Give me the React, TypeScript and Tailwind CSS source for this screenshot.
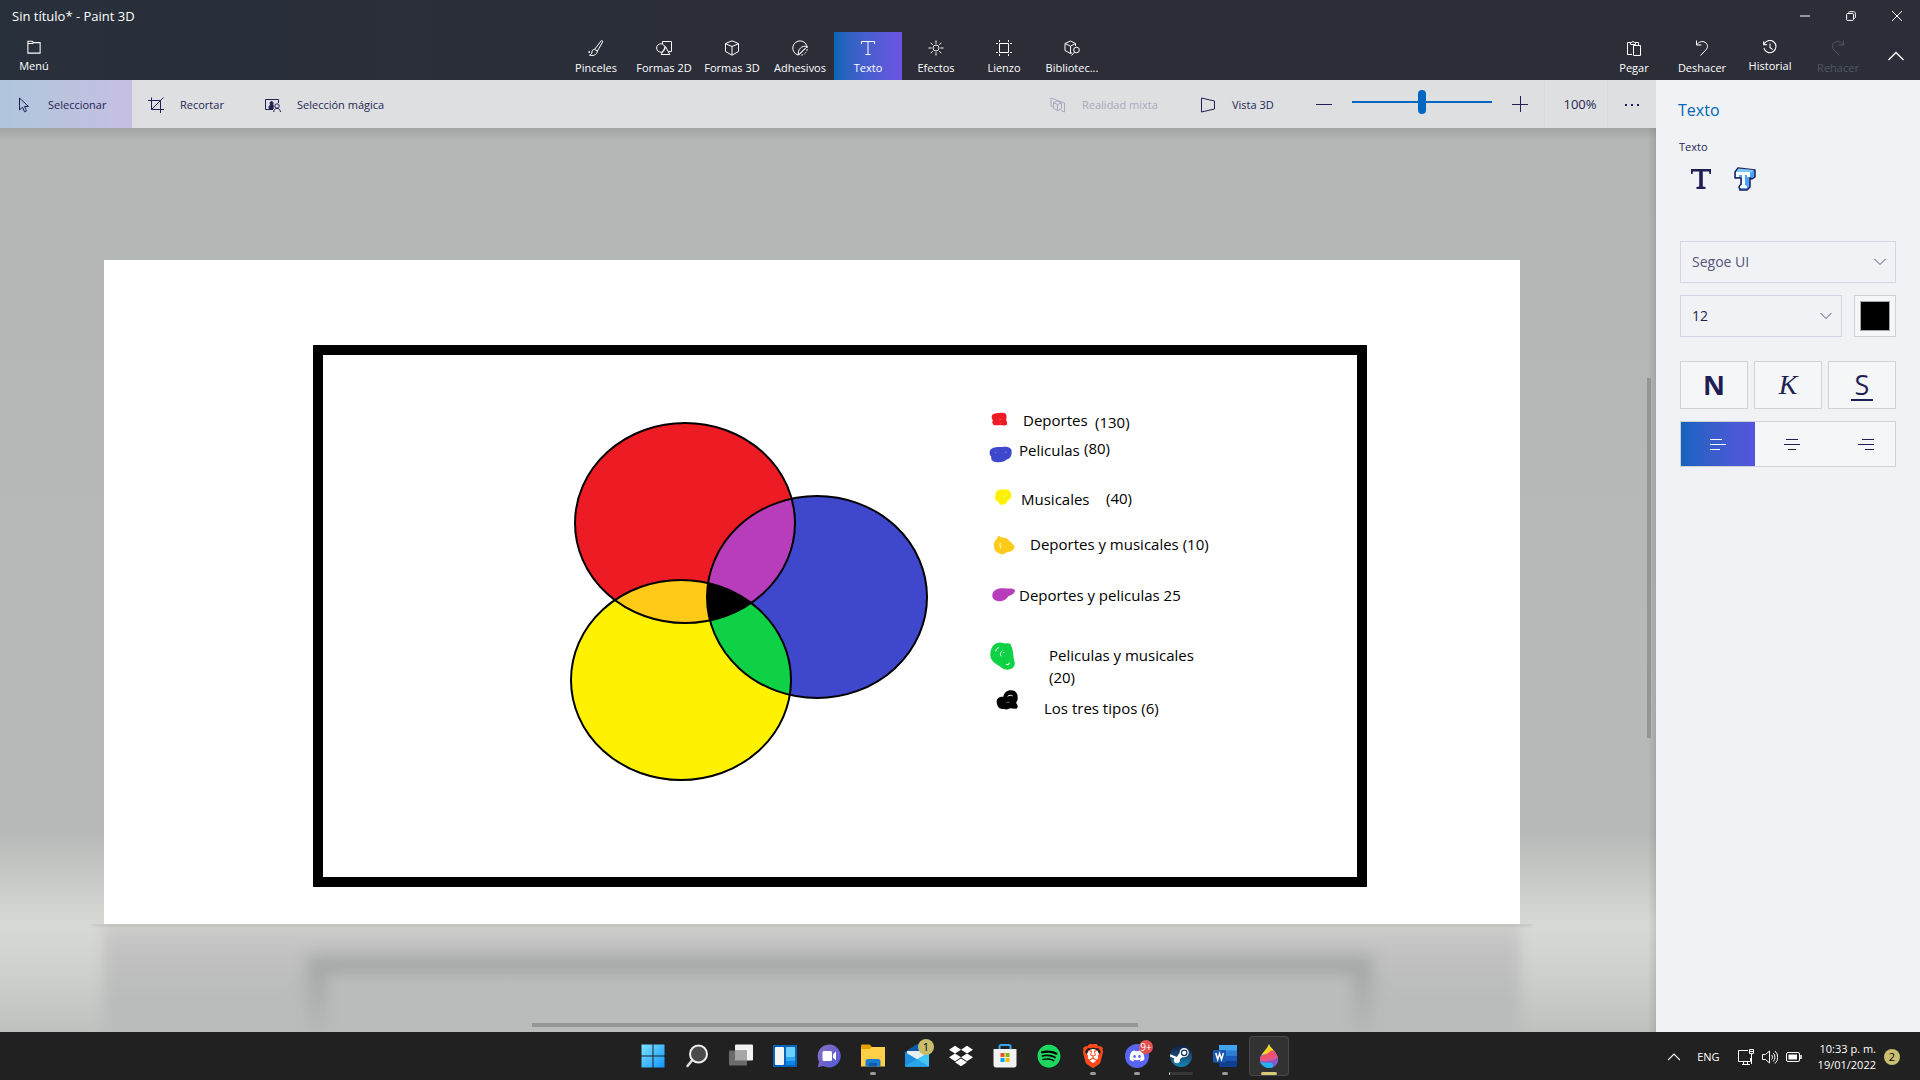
import React from "react";
import { FaSpotify, FaDiscord, FaDropbox } from "react-icons/fa";
import { SiBrave } from "react-icons/si";

type IconProps = { children: React.ReactNode; className?: string };

function Icon({ children, className = "size-4" }: IconProps) {
  return (
    <svg viewBox="0 0 16 16" fill="none" stroke="currentColor" strokeWidth="1" className={className} aria-hidden="true">
      {children}
    </svg>
  );
}

const icons = {
  menu: (
    <Icon className="size-[14px]">
      <path d="M1 15V1.500h5L7.500 3H15v12zM1 4h5.500l1-1" strokeWidth="1.200" />
    </Icon>
  ),
  brush: (
    <Icon>
      <path d="M13.200.8c.8-.5 1.900.3 1.400 1.300L9.400 11 6.600 9.400zM6.600 9.400C4.500 9.300 4 10.500 4 12c0 1.500-1 2.500-2.500 3.200 3 .8 7.500.2 7.900-4.200M1.200 11v2M.5 12h1.500" />
    </Icon>
  ),
  shapes2d: (
    <Icon>
      <circle cx="4.800" cy="8" r="4.200" />
      <path d="M6.500 4V1.500h9v10h-3" />
      <path d="M9.500 6.500 5.200 14.500h8.600z" />
    </Icon>
  ),
  shapes3d: (
    <Icon>
      <path d="M8 .8 14.500 3.500v8L8 15.200 1.500 11.500v-8zM1.500 3.700 8 6.500l6.500-2.800M8 6.500v8.500" />
    </Icon>
  ),
  sticker: (
    <Icon>
      <path d="M15.200 8A7.200 7.200 0 1 0 6 15" />
      <path d="M15.200 6.500 6.500 15.200c-.6-3 .2-5.500 2-7.200s4-2.200 6.700-1.500zM7 14.500l6-6" />
      <path d="M15.200 9A7 7 0 0 1 9 15.200" strokeDasharray="2 1.500" />
    </Icon>
  ),
  text: (
    <Icon>
      <path d="M1.500 4V1.500h13V4M8 1.500v13M5.500 14.500h5" />
    </Icon>
  ),
  effects: (
    <Icon>
      <circle cx="8" cy="8" r="3" />
      <path d="M8 .5v3M8 12.500v3M.5 8h3M12.500 8h3M2.700 2.700l2 2M11.300 11.300l2 2M13.300 2.700l-2 2M4.700 11.300l-2 2" />
    </Icon>
  ),
  canvas: (
    <Icon>
      <path d="M3.500 3.500h9v9h-9zM3.500 0v2M12.500 0v2M3.500 14v2M12.500 14v2M0 3.500h2M14 3.500h2M0 12.500h2M14 12.500h2" />
    </Icon>
  ),
  library: (
    <Icon>
      <path d="M11.500 6V3.500L6.500 1 1 3.500v7L6.500 13.500l1.500-.7M1 3.500l5.500 2.700 5-2.700M6.500 6.200v7" />
      <circle cx="12.500" cy="10" r="2.800" />
      <path d="M10.500 12 7.500 15.500" />
    </Icon>
  ),
  paste: (
    <Icon>
      <path d="M6 14.500H1.500v-12h3M9.500 2.500h3V5M4.500 4.500v-2h1.300a1.300 1.300 0 0 1 2.500 0h1.300v2zM7.500 5.500h7v10h-7z" />
    </Icon>
  ),
  undo: (
    <Icon>
      <path d="M2.500.5v4.500h5M2.500 5C5 1.500 8.500.8 11 2.300c3 1.800 3.200 5 1 7.500L6.500 15.500" />
    </Icon>
  ),
  history: (
    <Icon className="size-[14px]">
      <path d="M.8 1.500v4h4M1.200 5.200A7 7 0 1 1 1 9M8 4v4.500l3 2.500" strokeWidth="1.200" />
    </Icon>
  ),
  redo: (
    <Icon>
      <path d="M13.500.5v4.500h-5M13.500 5C11 1.500 7.500.8 5 2.300 2 4.100 1.800 7.300 4 9.800l5.500 5.700" />
    </Icon>
  ),
  select: (
    <Icon>
      <path d="M3.500 1v12l3-2.800 2 4.600 2-.9-2-4.400h4z" />
    </Icon>
  ),
  crop: (
    <Icon>
      <path d="M3.500.5v12H16M0 3.500h12.500V16M3.500 12.500l12-12" />
    </Icon>
  ),
  magic: (
    <Icon>
      <path d="M8 12.500H.5V2.500h13V6" />
      <path d="M4.500 12c-1-1.500-.4-3.500 1-4-.8-2.300-.2-3.500 1-3.500s2 1.200 1.200 3.500c.9.500.9 2 .3 4z" fill="currentColor" />
      <circle cx="12" cy="9" r="2.200" />
      <path d="M8.700 15c.2-2.500 1.400-3.600 3.300-3.600s3.200 1.100 3.500 3.600" />
    </Icon>
  ),
  mixed: (
    <Icon>
      <path d="M3 10 1 9V1l13.500 5v9l-3.500-1.500" />
      <path d="M3.500 5.500 7.500 4l4 2v5.500l-4 2.300-4-2.800zM3.500 5.500l4 2 4-1.500M7.500 7.500v6" />
    </Icon>
  ),
  view3d: (
    <Icon>
      <path d="M1.500 1v14l13-3V4z" />
    </Icon>
  ),
};

function RibbonButton({ icon, label, active, disabled }: { icon: React.ReactNode; label: string; active?: boolean; disabled?: boolean }) {
  return (
    <button
      type="button"
      disabled={disabled}
      className={
        "flex h-12 w-[68px] shrink-0 flex-col items-center gap-1 pt-2 text-[11px] leading-4 whitespace-nowrap " +
        (active ? "bg-linear-to-r from-[#0565b9] to-[#6a54e4] text-white" : disabled ? "text-[#54565f]" : "text-white")
      }
    >
      {icon}
      <span>{label}</span>
    </button>
  );
}

function Header() {
  return (
    <header className="bg-linear-to-r from-[#28303b] via-[#2c2d37] to-[#2b2e38] text-white">
      <div className="flex h-8 items-center justify-between">
        <h1 className="pl-3 text-[13px] leading-4 font-normal">Sin título* - Paint 3D</h1>
        <div className="flex">
          <button type="button" aria-label="Minimizar" className="flex h-8 w-[46px] items-center justify-center">
            <Icon className="size-[10px]"><path d="M0 8h16" strokeWidth="1.600" /></Icon>
          </button>
          <button type="button" aria-label="Restaurar" className="flex h-8 w-[46px] items-center justify-center">
            <Icon className="size-[10px]">
              <g strokeWidth="1.600">
                <rect x="1" y="4" width="11" height="11" rx="1.500" />
                <path d="M4 3.500C4 2 5 1 6.500 1H12c2 0 3 1 3 3v5.500c0 1.500-1 2.500-2.500 2.500" />
              </g>
            </Icon>
          </button>
          <button type="button" aria-label="Cerrar" className="flex h-8 w-[46px] items-center justify-center">
            <Icon className="size-[10px]"><path d="M0 0l16 16M16 0 0 16" strokeWidth="1.600" /></Icon>
          </button>
        </div>
      </div>
      <div className="flex">
        <RibbonButton icon={icons.menu} label="Menú" />
        <nav className="flex flex-1 justify-center">
          <RibbonButton icon={icons.brush} label="Pinceles" />
          <RibbonButton icon={icons.shapes2d} label="Formas 2D" />
          <RibbonButton icon={icons.shapes3d} label="Formas 3D" />
          <RibbonButton icon={icons.sticker} label="Adhesivos" />
          <RibbonButton icon={icons.text} label="Texto" active />
          <RibbonButton icon={icons.effects} label="Efectos" />
          <RibbonButton icon={icons.canvas} label="Lienzo" />
          <RibbonButton icon={icons.library} label="Bibliotec..." />
        </nav>
        <RibbonButton icon={icons.paste} label="Pegar" />
        <RibbonButton icon={icons.undo} label="Deshacer" />
        <RibbonButton icon={icons.history} label="Historial" />
        <RibbonButton icon={icons.redo} label="Rehacer" disabled />
        <button type="button" aria-label="Contraer cinta" className="flex w-12 items-center justify-center">
          <Icon><path d="M.5 12 8 4.500l7.500 7.500" strokeWidth="1.300" /></Icon>
        </button>
      </div>
    </header>
  );
}

type ToolButtonProps = { icon: React.ReactNode; label: string; width: string; active?: boolean; disabled?: boolean };

function ToolButton({ icon, label, width, active, disabled }: ToolButtonProps) {
  return (
    <button
      type="button"
      disabled={disabled}
      className={
        "flex h-12 shrink-0 items-center gap-4 pt-px pl-4 text-[11px] leading-4 whitespace-nowrap " +
        width +
        (active ? " bg-linear-to-r from-[#aec6db] to-[#c7bfe2]" : disabled ? " text-[#a9a9bd]" : "")
      }
    >
      {icon}
      <span>{label}</span>
    </button>
  );
}

function Toolbar() {
  return (
    <div className="relative z-10 flex h-12 items-center bg-[#dddfe1] text-[#1f1f55]">
      <ToolButton icon={icons.select} label="Seleccionar" width="w-[132px]" active />
      <ToolButton icon={icons.crop} label="Recortar" width="w-[117px]" />
      <ToolButton icon={icons.magic} label="Selección mágica" width="w-[164px]" />
      <div className="flex-1" />
      <ToolButton icon={icons.mixed} label="Realidad mixta" width="w-[150px]" disabled />
      <ToolButton icon={icons.view3d} label="Vista 3D" width="w-[116px]" />
      <button type="button" aria-label="Alejar" className="flex size-12 items-center justify-center">
        <Icon><path d="M0 8.500h16" /></Icon>
      </button>
      <input
        type="range"
        aria-label="Zoom"
        min={0}
        max={100}
        defaultValue={50}
        className="mx-1 mb-1 h-6 w-[140px] appearance-none bg-transparent [&::-webkit-slider-runnable-track]:h-0.5 [&::-webkit-slider-runnable-track]:bg-[#0067c0] [&::-webkit-slider-thumb]:-mt-[11px] [&::-webkit-slider-thumb]:h-6 [&::-webkit-slider-thumb]:w-2 [&::-webkit-slider-thumb]:appearance-none [&::-webkit-slider-thumb]:rounded-full [&::-webkit-slider-thumb]:bg-[#0067c0]"
      />
      <button type="button" aria-label="Acercar" className="flex size-12 items-center justify-center">
        <Icon><path d="M0 8.500h16M8.500 0v16" /></Icon>
      </button>
      <button type="button" className="h-12 w-16 border-x border-[#d5d7e2] pt-px pl-2 text-[13px]">100%</button>
      <button type="button" aria-label="Más opciones" className="flex size-12 items-center justify-center">
        <Icon>
          <g fill="currentColor" stroke="none">
            <rect x="1" y="8" width="2" height="2" />
            <rect x="7" y="8" width="2" height="2" />
            <rect x="13" y="8" width="2" height="2" />
          </g>
        </Icon>
      </button>
    </div>
  );
}

function VennDiagram() {
  return (
    <svg viewBox="560 410 380 380" className="absolute top-[150px] left-[456px] size-[380px]" role="img" aria-label="Diagrama de Venn">
      <defs>
        <clipPath id="inRed"><ellipse cx="685" cy="523" rx="110" ry="100" /></clipPath>
        <clipPath id="inBlue"><ellipse cx="817" cy="597" rx="110" ry="101" /></clipPath>
      </defs>
      <ellipse cx="685" cy="523" rx="110" ry="100" fill="#ed1c24" />
      <ellipse cx="817" cy="597" rx="110" ry="101" fill="#3f48cc" />
      <ellipse cx="681" cy="680" rx="110" ry="100" fill="#fff200" />
      <g clipPath="url(#inRed)">
        <ellipse cx="817" cy="597" rx="110" ry="101" fill="#b83dba" />
        <ellipse cx="681" cy="680" rx="110" ry="100" fill="#ffca18" />
      </g>
      <g clipPath="url(#inBlue)">
        <ellipse cx="681" cy="680" rx="110" ry="100" fill="#0ed145" />
        <g clipPath="url(#inRed)">
          <ellipse cx="681" cy="680" rx="110" ry="100" fill="#000" />
        </g>
      </g>
      <g fill="none" stroke="#000" strokeWidth="2">
        <ellipse cx="685" cy="523" rx="110" ry="100" />
        <ellipse cx="817" cy="597" rx="110" ry="101" />
        <ellipse cx="681" cy="680" rx="110" ry="100" />
      </g>
    </svg>
  );
}

function LegendMarks() {
  return (
    <svg viewBox="0 0 840 1020" className="absolute top-[130px] left-[856px] h-[340px] w-[280px]" aria-hidden="true">
      <path fill="#ed1c24" d="M97 74c8-5 32-8 40-3 4 6 3 14 1 19 4 5 4 11 2 15-5 2-14 1-19 0-7 1-16 2-21-1-4-5-4-10-1-13-5-5-5-12-2-17z" />
      <path stroke="#fbb" strokeWidth="1" fill="none" d="M117 90l8-3M119 99h4" />
      <path fill="#3f48cc" d="M89 186c1-14 20-16 38-15 16-2 29 2 28 15 0 15-8 21-14 22-6 8-22 10-34 8-12-3-15-9-13-16-4-3-6-9-5-14z" />
      <path stroke="#8f94e0" strokeWidth="2" fill="none" d="M104 188h5M133 187l8-1" />
      <path fill="#fff200" d="M107 312c1-10 11-13 16-14 8 2 11 2 16 0 10 2 15 9 15 18 0 10-6 15-12 16-1 9-10 13-16 12-6-1-10-4-10-9-10-2-14-11-9-23z" />
      <path stroke="#fff" strokeWidth="2" fill="none" d="M129 320l7-3" />
      <path fill="#ffca18" d="M102 462c1-11 7-13 10-17 1-8 7-9 10-3 8 0 18 2 23 7 4 7 17 12 19 23-3 10-14 14-24 15-8 8-20 6-26 1-10-4-13-14-12-26z" />
      <path stroke="#fff" strokeWidth="3" fill="none" d="M121 459c-2 6-1 11 2 16" />
      <path fill="#b83dba" d="M97 615c2-15 16-20 32-20 16 1 33-2 36 6 0 10-11 14-20 18-5 9-16 15-27 15-12-1-22-7-21-19z" />
      <path fill="#0ed145" d="M91 792c1-20 11-33 25-34 10-2 16 4 24 2 8-2 14 1 13 7 8 13 6 34 11 50 2 13-8 22-22 22-13 0-19-9-29-14-14-8-23-18-22-33z" />
      <path stroke="#fff" strokeWidth="3" fill="none" d="M107 784c1-7 5-10 10-11M127 782c-6 6-8 10-3 17M130 786l3 3M138 823l8 1 2-6" />
      <path fill="#000" d="M110 937c-1-12 8-18 20-17 2-12 12-20 24-19 14 0 20 12 19 24 0 8-3 10-5 14 7 6 6 15 1 17-7 1-13-1-19-1-6 4-14 4-18 1-11 4-20-4-22-19z" />
      <path stroke="#fff" strokeWidth="3" fill="none" d="M143 919c4-4 11-4 15-1" />
      <path stroke="#999" strokeWidth="2" fill="none" d="M139 937h10" />
    </svg>
  );
}

function Drawing() {
  return (
    <div className="relative z-10 flex-1 bg-white text-[15px] leading-[22px] text-black">
      <div className="absolute top-[85px] right-[153px] bottom-[37px] left-[209px] border-[10px] border-black" />
      <VennDiagram />
      <LegendMarks />
      <p className="absolute top-[149px] left-[919px] whitespace-nowrap">Deportes</p>
      <p className="absolute top-[151px] left-[991px] whitespace-nowrap">(130)</p>
      <p className="absolute top-[179px] left-[915px] whitespace-nowrap">Peliculas</p>
      <p className="absolute top-[177px] left-[980px] whitespace-nowrap">(80)</p>
      <p className="absolute top-[228px] left-[917px] whitespace-nowrap">Musicales</p>
      <p className="absolute top-[227px] left-[1002px] whitespace-nowrap">(40)</p>
      <p className="absolute top-[273px] left-[926px] whitespace-nowrap">Deportes y musicales (10)</p>
      <p className="absolute top-[324px] left-[915px] whitespace-nowrap">Deportes y peliculas 25</p>
      <p className="absolute top-[384px] left-[945px] w-[160px]">Peliculas y musicales (20)</p>
      <p className="absolute top-[437px] left-[940px] whitespace-nowrap">Los tres tipos (6)</p>
    </div>
  );
}

function Reflection() {
  return (
    <div className="absolute inset-x-0 bottom-0 h-[108px] overflow-hidden">
      <div className="absolute top-0 right-[136px] -bottom-10 left-[104px] bg-linear-to-b from-[#cbcccb] via-[#c0c1c0] via-20% to-[#babcbb] to-50% blur-[6px]" />
      <div className="absolute top-0 right-[124px] left-[92px] h-[2px] bg-black/10 blur-[1px]" />
      <div className="absolute top-[32px] right-[284px] -bottom-16 left-[308px] border-[18px] border-[#979998]/65 blur-[8px]" />
      <div className="absolute right-[250px] bottom-0 left-[280px] h-[60px] bg-linear-to-b from-transparent to-[#babcbb]/80" />
    </div>
  );
}

function Stage() {
  return (
    <main className="relative flex min-h-0 flex-1 flex-col overflow-hidden bg-linear-to-b from-[#b4b6b5] from-0% via-[#b8bab9] via-78% to-[#d7d9d5] to-88% pt-[132px] pr-[136px] pb-[108px] pl-[104px]">
      <div className="absolute inset-x-0 bottom-0 h-[108px] bg-linear-to-b from-[#d7d9d5] via-[#d2d4d0] via-30% to-[#bfc1bf]" />
      <Reflection />
      <Drawing />
      <div className="absolute inset-x-0 top-0 h-3 bg-linear-to-b from-black/10 to-transparent" />
      <div className="absolute inset-y-0 right-0 w-2 bg-linear-to-l from-black/10 to-transparent" />
      <div className="absolute top-[250px] right-[5px] h-[360px] w-1 bg-[#969595]" />
      <div className="absolute bottom-[5px] left-[532px] z-20 h-1 w-[606px] bg-[#969696]" />
    </main>
  );
}

function Chevron({ className }: { className: string }) {
  return (
    <svg viewBox="0 0 12 8" className={className} fill="none" stroke="currentColor" strokeWidth="1" aria-hidden="true">
      <path d="M.5 1 6 6.500 11.500 1" />
    </svg>
  );
}

function SidePanel() {
  const styleButton = "flex h-12 flex-1 items-center justify-center border border-[#d0d2d3] bg-[#f5f6f8]";
  const alignButton = "flex w-[74px] shrink-0 items-center justify-center";
  const select = "h-[42px] w-full appearance-none border border-[#d3d6e2] bg-transparent px-[11px] pb-0.5 text-[14px]";
  return (
    <aside className="relative w-[264px] shrink-0 bg-[#f0f2f5] px-6 pt-[18px] text-[#1f1f55]">
      <h2 className="-ml-0.5 text-[16px] leading-6 text-[#0067b8]">Texto</h2>
      <h3 className="mt-[17px] -ml-px text-[11px] leading-4">Texto</h3>
      <div className="mt-1 -ml-px flex">
        <button type="button" aria-label="Texto 2D" className="flex h-10 w-11 items-center justify-center">
          <svg viewBox="0 0 20 20" className="size-5" fill="currentColor" aria-hidden="true">
            <path d="M0 0h20v5h-1.500L18 2.500h-6.200V17.500l2.700.5v2h-9v-2l2.700-.5V2.500H2L1.500 5H0z" />
          </svg>
        </button>
        <button type="button" aria-label="Texto 3D" className="flex h-10 w-11 items-center justify-center">
          <svg viewBox="0 0 22 24" className="h-6 w-[22px]" strokeLinejoin="round" aria-hidden="true">
            <path d="M1 5 4 1l17 2v7l-3 2-2-1v9l-3 3H6l-1-3 2-3V11H1z" fill="#4aa3ff" stroke="#1f1f55" strokeWidth="1.500" />
            <path d="M4.500 1.500 20 3l-2.500 2.500L2 5z" fill="#7ac8ff" />
            <path d="M2 5h14v5h-3V8h-2v10l2 1v2H6v-2l2-1V8H5v2H2z" fill="#fff" />
          </svg>
        </button>
      </div>
      <div className="relative mt-[42px]">
        <select aria-label="Fuente" className={select + " text-[#55547c]"}>
          <option>Segoe UI</option>
        </select>
        <Chevron className="pointer-events-none absolute top-[17px] right-[10px] h-2 w-3 text-[#55547c]" />
      </div>
      <div className="mt-3 flex gap-3">
        <div className="relative flex-1">
          <select aria-label="Tamaño de fuente" className={select}>
            <option>12</option>
          </select>
          <Chevron className="pointer-events-none absolute top-[17px] right-[10px] h-2 w-3 text-[#55547c]" />
        </div>
        <button type="button" aria-label="Color" className="flex size-[42px] items-center justify-center border border-[#d0d2d3] bg-[#f5f6f8]">
          <span className="size-[30px] border border-[#a6a6a6] bg-black" />
        </button>
      </div>
      <div className="mt-6 flex gap-1.5">
        <button type="button" aria-label="Negrita" className={styleButton}>
          <span className="text-[27px] leading-8 font-bold">N</span>
        </button>
        <button type="button" aria-label="Cursiva" className={styleButton}>
          <span className="font-['Liberation_Serif',serif] text-[28px] leading-8 italic">K</span>
        </button>
        <button type="button" aria-label="Subrayado" className={styleButton}>
          <span className="mt-0.5 w-[22px] border-b-2 border-current text-[27px] leading-7">S</span>
        </button>
      </div>
      <div className="mt-3 flex h-[46px] overflow-hidden border border-[#d0d2d3] bg-[#f5f6f8]">
        <button type="button" aria-label="Alinear a la izquierda" className={alignButton + " bg-linear-to-r from-[#1463bf] to-[#5455dc] text-white"}>
          <Icon><path d="M0 3.500h12M0 8.500h16M0 13.500h10" /></Icon>
        </button>
        <button type="button" aria-label="Centrar" className={alignButton}>
          <Icon><path d="M2 3.500h12M0 8.500h16M4 13.500h8" /></Icon>
        </button>
        <button type="button" aria-label="Alinear a la derecha" className={alignButton}>
          <Icon><path d="M4 3.500h12M0 8.500h16M7 13.500h9" /></Icon>
        </button>
      </div>
    </aside>
  );
}

type TaskItemProps = { label: string; children: React.ReactNode; running?: boolean; active?: boolean; badge?: React.ReactNode };

function TaskItem({ label, children, running, active, badge }: TaskItemProps) {
  return (
    <button
      type="button"
      aria-label={label}
      className={"relative flex size-10 items-center justify-center rounded-sm " + (active ? "border border-white/10 bg-white/8" : "")}
    >
      {children}
      {badge}
      {running && <span className="absolute bottom-[1px] h-[3px] w-1.5 rounded-full bg-[#9a9a9a]" />}
      {active && <span className="absolute bottom-0 h-[3px] w-4 rounded-full bg-[#d5ca78]" />}
    </button>
  );
}

function Art({ children }: { children: React.ReactNode }) {
  return (
    <svg viewBox="0 0 24 24" className="size-6" aria-hidden="true">
      {children}
    </svg>
  );
}

function Taskbar() {
  return (
    <footer className="grid h-12 shrink-0 grid-cols-[1fr_auto_1fr] items-center bg-[#212121] text-white">
      <div />
      <div className="flex gap-1 pl-0.5">
        <TaskItem label="Inicio">
          <Art>
            <defs>
              <linearGradient id="win" gradientUnits="userSpaceOnUse" x1="0" y1="0" x2="24" y2="24">
                <stop offset="0" stopColor="#7fe4ff" />
                <stop offset="1" stopColor="#0f94ff" />
              </linearGradient>
            </defs>
            <path fill="url(#win)" d="M.5.500h11v11H.5zM12.500.500h11v11h-11zM.5 12.500h11v11H.5zM12.500 12.500h11v11h-11z" />
          </Art>
        </TaskItem>
        <TaskItem label="Buscar">
          <Art>
            <path d="M7 16.500 2.500 22" stroke="#dcdcdc" strokeWidth="2.500" strokeLinecap="round" />
            <circle cx="13.500" cy="10" r="8.500" fill="#4b4b4b" stroke="#efefef" strokeWidth="2" />
          </Art>
        </TaskItem>
        <TaskItem label="Vista de tareas">
          <Art>
            <rect x="6" y="0.500" width="18" height="16" rx="1" fill="#f2f2f2" />
            <rect x="0" y="6.500" width="18" height="15" rx="1" fill="#6b6b6b" />
            <path d="M6 6.500h12v10H6z" fill="#a5a5a5" />
          </Art>
        </TaskItem>
        <TaskItem label="Widgets">
          <Art>
            <rect y="1" width="24" height="22" rx="1" fill="#0a63b8" />
            <rect x="2" y="3" width="9" height="18" rx="1" fill="#f3f3f3" />
            <rect x="13" y="3" width="9" height="10" rx="1" fill="#69d2ff" />
            <rect x="13" y="13" width="9" height="4" fill="#2fa8f5" />
            <rect x="13" y="17" width="9" height="4" fill="#0b86e4" />
          </Art>
        </TaskItem>
        <TaskItem label="Chat">
          <Art>
            <defs>
              <linearGradient id="chat" x1="0" y1="0" x2="1" y2="1">
                <stop offset="0" stopColor="#8c6fc4" />
                <stop offset="1" stopColor="#5059d6" />
              </linearGradient>
            </defs>
            <path fill="url(#chat)" d="M12 .5A11.500 11.500 0 1 1 6.500 22L.8 23.200 2 17.500A11.500 11.500 0 0 1 12 .5z" />
            <rect x="5.500" y="7" width="9.500" height="10" rx="1.500" fill="#fff" />
            <path d="M16 10.500 19 7.500v9l-3-3z" fill="#fff" />
          </Art>
        </TaskItem>
        <TaskItem label="Explorador de archivos" running>
          <Art>
            <path d="M0 2c0-1 .5-1.500 1.500-1.500h7L11 3h13v6H0z" fill="#e8a200" />
            <path d="M0 5h8.500L11 3h12c.6 0 1 .4 1 1v18.500H0z" fill="#ffcf48" />
            <path d="M4.500 22.500v-5c0-1.500 1-2.500 2.500-2.500h10c1.500 0 2.500 1 2.500 2.500v5z" fill="#1a7ad0" />
            <path d="M8 19h8v3.500H8z" fill="#125ba6" />
          </Art>
        </TaskItem>
        <TaskItem
          label="Correo"
          badge={<span className="absolute top-[3px] right-[3px] flex size-4 items-center justify-center rounded-full bg-[#c8bd6d] text-[11px] leading-4 text-black">1</span>}
        >
          <Art>
            <path d="M0 8 12 0l12 8v4H0z" fill="#0c5ba8" />
            <path d="M2 7h20v7l-10 5L2 14z" fill="#e9eef2" />
            <path d="M0 8v14.500h24z" fill="#1e8fe0" />
            <path d="M24 8v14.500H0L14 14z" fill="#43c6f5" />
            <path d="M0 22.500 12 15l12 7.500z" fill="#2aa4ea" />
          </Art>
        </TaskItem>
        <TaskItem label="Dropbox">
          <FaDropbox className="size-6" />
        </TaskItem>
        <TaskItem label="Microsoft Store">
          <Art>
            <path d="M6.500 6V2.500c0-1 .5-1.500 1.500-1.500h8c1 0 1.500.5 1.500 1.500V6" fill="none" stroke="#31a9f0" strokeWidth="2" />
            <path d="M.5 5h23v16c0 1.500-1 2.500-2.500 2.500H3C1.500 23.500.5 22.500.5 21z" fill="#f2f2f2" />
            <path d="M7.500 9h4v4h-4z" fill="#f1511b" />
            <path d="M12.500 9h4v4h-4z" fill="#80bb03" />
            <path d="M7.500 14h4v4h-4z" fill="#03a5ef" />
            <path d="M12.500 14h4v4h-4z" fill="#ffb902" />
          </Art>
        </TaskItem>
        <TaskItem label="Spotify">
          <span className="flex rounded-full bg-black">
            <FaSpotify className="size-6 text-[#1ed760]" />
          </span>
        </TaskItem>
        <TaskItem label="Brave" running>
          <span className="relative flex">
            <span className="absolute inset-x-[6px] inset-y-[5px] rounded-full bg-white" />
            <SiBrave className="relative size-6 text-[#fb4a1d]" />
          </span>
        </TaskItem>
        <TaskItem
          label="Discord"
          running
          badge={<span className="absolute top-1 right-1 flex size-3.5 items-center justify-center rounded-full bg-[#e2504f] text-[10px] leading-3">9+</span>}
        >
          <span className="flex size-6 items-center justify-center rounded-full bg-[#5865f2]">
            <FaDiscord className="size-4" />
          </span>
        </TaskItem>
        <TaskItem label="Steam">
          <span className="flex size-[22px] rounded-full bg-linear-to-b from-[#101c3c] to-[#1387b8]">
            <svg viewBox="0 0 24 24" className="size-[22px]" aria-hidden="true">
              <path d="M0 12.500 9 16.500 14 13a5 5 0 1 0-3.500-4.500L7.500 13 .2 10z" fill="#fff" />
              <circle cx="7.500" cy="16.500" r="3.300" fill="#fff" />
              <circle cx="15.500" cy="8.500" r="3" fill="none" stroke="#12325a" strokeWidth="1.300" />
            </svg>
          </span>
          <span className="absolute bottom-[1px] flex h-[3px] w-6 overflow-hidden rounded-full bg-white/10">
            <span className="w-px bg-white" />
          </span>
        </TaskItem>
        <TaskItem label="Word" running>
          <Art>
            <path d="M6 1h18v6H6z" fill="#41a5ee" />
            <path d="M6 6.500h18v5.500H6z" fill="#2b7cd3" />
            <path d="M6 12h18v5.500H6z" fill="#185abd" />
            <path d="M6 17.500h18V23H6z" fill="#103f91" />
            <rect x="0" y="6" width="13" height="12.500" rx="1" fill="#1a56b0" />
            <path d="m2.800 9 1.900 6.500L6.600 9.500l1.900 6L10.400 9" fill="none" stroke="#fff" strokeWidth="1.500" />
          </Art>
        </TaskItem>
        <TaskItem label="Paint 3D" active>
          <Art>
            <defs>
              <clipPath id="drop">
                <path d="M12 0c1 4 9 9 9 15.500a9 8.500 0 0 1-18 0C3 10 10 6 12 0z" />
              </clipPath>
            </defs>
            <g clipPath="url(#drop)">
              <path d="M0 0h24v24H0z" fill="#2ba9e6" />
              <path d="M4 0h16v9L2 11z" fill="#ffd21f" />
              <path d="M0 12c6 0 11-2 14-5.500L24 8v6L0 17z" fill="#f0506f" />
              <path d="M0 15c9 1 16-1 22-6l2 6-8 5-16-1z" fill="#e0568d" />
              <path d="M0 16.500c8 2 17 1 22-4.500v9l-7 3-15-3z" fill="#8b57c8" />
              <path d="M0 16c4 3 8 3 12 2.500 4-.5 5 2 3 5.500H0z" fill="#22b4f2" />
            </g>
          </Art>
        </TaskItem>
      </div>
      <div className="flex items-center justify-end pt-px pr-5 text-[11px] leading-4">
        <button type="button" aria-label="Mostrar iconos ocultos" className="mr-[17px] flex">
          <Icon className="size-3"><path d="M0 12 8 4l8 8" strokeWidth="1.600" /></Icon>
        </button>
        <span className="mr-[18px]">ENG</span>
        <Icon>
          <path d="M10 1.500H.5v11h12V9M4 15.500h8M5.500 13v2.500M9.500 13v2.500M11.500.5h4v4h-4zM13.500 5v10M11.500 2.500h4" />
        </Icon>
        <Icon className="ml-2 size-4">
          <path d="M.5 5.500h3L7.500 2v12l-4-3.500h-3zM9.500 6a3 3 0 0 1 0 4.500M11.200 4a6 6 0 0 1 0 8.500M13 2a8.500 8.500 0 0 1 0 12.500" />
        </Icon>
        <Icon className="ml-2 size-4">
          <rect x=".5" y="3.500" width="13" height="9" rx="1.500" />
          <rect x="2.500" y="5.500" width="8.500" height="5" fill="currentColor" stroke="none" />
          <path d="M15 6v4" strokeWidth="1.500" />
        </Icon>
        <div className="ml-4 text-right">
          <div>10:33 p. m.</div>
          <div>19/01/2022</div>
        </div>
        <span className="ml-2 flex size-4 items-center justify-center rounded-full bg-[#cabf70] text-[11px] leading-4 text-black">2</span>
      </div>
    </footer>
  );
}

export default function App() {
  return (
    <div className="flex h-screen flex-col overflow-hidden font-['Open_Sans','Noto_Sans',sans-serif]">
      <Header />
      <div className="flex min-h-0 flex-1">
        <div className="flex min-w-0 flex-1 flex-col">
          <Toolbar />
          <Stage />
        </div>
        <SidePanel />
      </div>
      <Taskbar />
    </div>
  );
}
